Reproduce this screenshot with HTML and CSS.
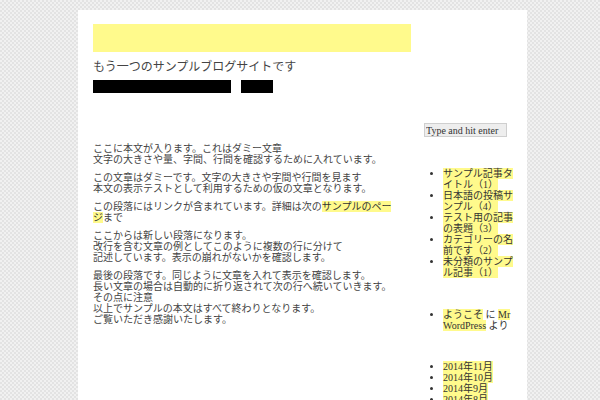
FILE: index.html
```html
<!DOCTYPE html>
<html lang="ja">
<head>
<meta charset="utf-8">
<title>サンプルブログ</title>
<link rel="stylesheet" href="styles.css">
</head>
<body>
<div class="page">
  <header class="site-header">
    <div class="logo-bar"></div>
    <p class="tagline">もう一つのサンプルブログサイトです</p>
    <nav class="nav">
      <a class="nav-item nav-wide" href="#">サンプルページのタイトルです</a>
      <a class="nav-item nav-narrow" href="#">ホーム</a>
    </nav>
  </header>
  <div class="layout">
    <main class="content">
      <p>ここに本文が入ります。これはダミー文章<br>文字の大きさや量、字間、行間を確認するために入れています。</p>
      <p>この文章はダミーです。文字の大きさや字間や行間を見ます<br>本文の表示テストとして利用するための仮の文章となります。</p>
      <p>この段落にはリンクが含まれています。詳細は次の<a class="hl" href="#">サンプルのページ</a>まで</p>
      <p>ここからは新しい段落になります。<br>改行を含む文章の例としてこのように複数の行に分けて<br>記述しています。表示の崩れがないかを確認します。</p>
      <p>最後の段落です。同じように文章を入れて表示を確認します。<br>長い文章の場合は自動的に折り返されて次の行へ続いていきます。その点に注意<br>以上でサンプルの本文はすべて終わりとなります。<br>ご覧いただき感謝いたします。</p>
    </main>
    <aside class="sidebar">
      <input class="search" type="text" placeholder="Type and hit enter">
      <ul class="widget widget-posts">
        <li><a class="hl" href="#">サンプル記事タイトル（1）</a></li>
        <li><a class="hl" href="#">日本語の投稿サンプル（4）</a></li>
        <li><a class="hl" href="#">テスト用の記事の表題（3）</a></li>
        <li><a class="hl" href="#">カテゴリーの名前です（2）</a></li>
        <li><a class="hl" href="#">未分類のサンプル記事（1）</a></li>
      </ul>
      <ul class="widget widget-comments">
        <li><a class="hl" href="#">ようこそ</a> に <a class="hl" href="#">Mr WordPress</a> より</li>
      </ul>
      <ul class="widget widget-archives">
        <li><a class="hl" href="#">2014年11月</a></li>
        <li><a class="hl" href="#">2014年10月</a></li>
        <li><a class="hl" href="#">2014年9月</a></li>
        <li><a class="hl" href="#">2014年8月</a></li>
      </ul>
    </aside>
  </div>
</div>
</body>
</html>
```
FILE: styles.css
```css
html, body {
  margin: 0;
  padding: 0;
}
body {
  background: repeating-conic-gradient(#e3e3e3 0 25%, #f1f1f1 0 50%) 0 0 / 4px 4px;
  font-family: "Liberation Serif", "Noto Sans CJK JP", serif;
  font-size: 10px;
  line-height: 11px;
  color: #444;
  height: 400px;
  overflow: hidden;
}
.page {
  background: #fff;
  width: 449px;
  min-height: 420px;
  margin: 10px 0 0 78px;
  padding: 14px 12px 0 15px;
  box-sizing: border-box;
}
.logo-bar {
  width: 318px;
  height: 28px;
  background: #fffa8c;
}
.tagline {
  margin: 8px 0 0;
  font-size: 12px;
  line-height: 14px;
  color: #444;
}
.nav {
  display: flex;
  gap: 10px;
  margin-top: 6px;
  height: 13px;
}
.nav-item {
  display: block;
  height: 13px;
  background: #000;
  color: #000;
  text-decoration: none;
  overflow: hidden;
  white-space: nowrap;
  font-size: 10px;
  line-height: 13px;
}
.nav-wide { width: 138px; }
.nav-narrow { width: 32px; }
.layout {
  display: flex;
  margin-top: 30px;
  gap: 29px;
}
.content {
  width: 302px;
  flex: none;
  padding-top: 13px;
}
.content p {
  margin: 7px 0;
}
.hl {
  background: #fffa8c;
  color: #333;
  text-decoration: none;
}
.sidebar {
  width: 91px;
  flex: none;
}
.search {
  display: block;
  box-sizing: border-box;
  width: 83px;
  height: 14px;
  margin: 0;
  padding: 0 1px;
  border: 1px solid #cfcfcf;
  background: #eeeeee;
  font-family: "Liberation Serif", serif;
  font-size: 10px;
  color: #333;
}
.search::placeholder {
  color: #333;
  opacity: 1;
}
.widget {
  margin: 31px 0 0;
  padding: 0 0 0 19px;
  width: 76px;
  list-style: disc;
  color: #333;
}
.widget-archives {
  margin-top: 30px;
}
.widget li {
  line-height: 11px;
}
```
